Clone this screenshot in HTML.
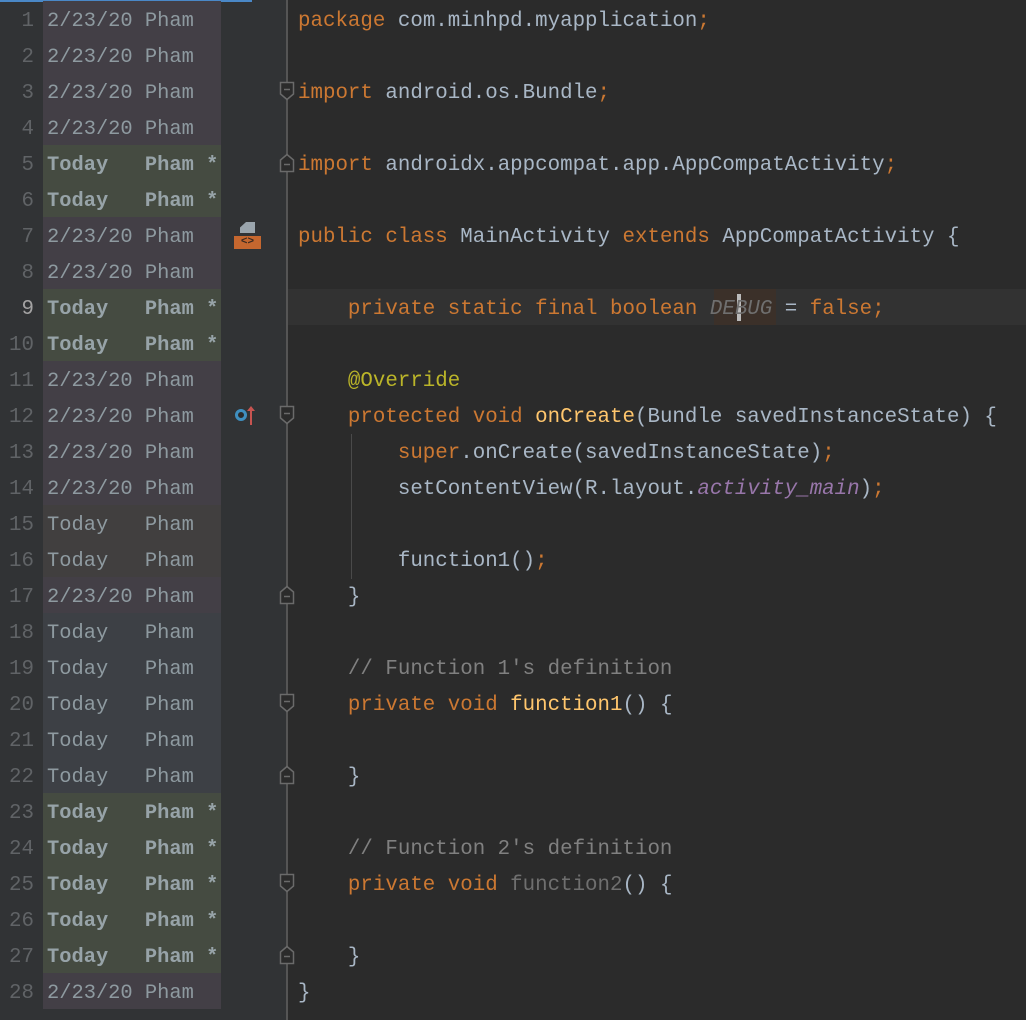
<!DOCTYPE html><html><head><style>
body{margin:0;width:1026px;height:1020px;background:#2b2b2b;overflow:hidden;position:relative;font-family:"Liberation Mono",monospace;font-size:20.8px}
.g{position:absolute;left:0;top:0;width:288px;height:1020px;background:#313335}
.r{position:absolute;height:36px;line-height:36px;white-space:pre}
.n{left:0;width:34px;text-align:right;color:#606366}
.a{left:43px;width:178px;padding-left:4px;box-sizing:border-box;color:#8e9aa0;font-size:20.4px}
.o{background:#433f46}.t{background:#454b41;font-weight:bold;color:#97a3a8}.u{background:#413f3f}.v{background:#3d4045}
.c{left:298px;color:#a9b7c6}
.k{color:#cc7832}.m{color:#ffc66d}.cm{color:#808080}.an{color:#bbb529}.f{color:#9876aa;font-style:italic}.x{color:#6f6f6f}
.fold{position:absolute;left:279px;width:16px;height:20px}
</style></head><body>
<div class="g"></div>
<div style="position:absolute;left:0;top:0;width:252px;height:2px;background:#4a88c7"></div>
<div style="position:absolute;left:286px;top:0;width:2px;height:1020px;background:#555"></div>
<div style="position:absolute;left:288px;top:289px;width:738px;height:36px;background:#323232"></div>
<div style="position:absolute;left:714px;top:289px;width:62px;height:36px;background:#3b3029"></div>
<div style="position:absolute;left:351px;top:434px;width:1px;height:145px;background:#4a4a4a"></div>
<div style="position:absolute;left:737px;top:294px;width:4px;height:27px;background:#bbb"></div>
<div style="position:absolute;left:240px;top:222px;width:15px;height:11px;background:#9aa5ad;clip-path:polygon(40% 0,100% 0,100% 100%,0 100%,0 50%)"></div>
<div style="position:absolute;left:234px;top:236px;width:27px;height:13px;background:#c5672f;color:#3a2a20;font-size:11px;line-height:13px;text-align:center;font-weight:bold">&lt;&gt;</div>
<div style="position:absolute;left:235px;top:409px;border:3px solid #3f8fbf;border-radius:50%;width:6px;height:6px;background:#2b2b2b"></div>
<div style="position:absolute;left:250px;top:408px;width:2px;height:17px;background:#c75450"></div>
<div style="position:absolute;left:247px;top:406px;width:0;height:0;border-left:4px solid transparent;border-right:4px solid transparent;border-bottom:5px solid #c75450"></div>
<div id="rows"></div>
<script>
const a=[
["o","2/23/20 Pham"],["o","2/23/20 Pham"],["o","2/23/20 Pham"],["o","2/23/20 Pham"],
["t","Today   Pham *"],["t","Today   Pham *"],["o","2/23/20 Pham"],["o","2/23/20 Pham"],
["t","Today   Pham *"],["t","Today   Pham *"],["o","2/23/20 Pham"],["o","2/23/20 Pham"],
["o","2/23/20 Pham"],["o","2/23/20 Pham"],["u","Today   Pham"],["u","Today   Pham"],
["o","2/23/20 Pham"],["v","Today   Pham"],["v","Today   Pham"],["v","Today   Pham"],["v","Today   Pham"],["v","Today   Pham"],
["t","Today   Pham *"],["t","Today   Pham *"],["t","Today   Pham *"],["t","Today   Pham *"],["t","Today   Pham *"],["o","2/23/20 Pham"]];
const c=[
'<span class=k>package</span> com.minhpd.myapplication<span class=k>;</span>','',
'<span class=k>import</span> android.os.Bundle<span class=k>;</span>','',
'<span class=k>import</span> androidx.appcompat.app.AppCompatActivity<span class=k>;</span>','',
'<span class=k>public class</span> MainActivity <span class=k>extends</span> AppCompatActivity {','',
'    <span class=k>private static final boolean</span> <span class=f style="color:#6f6f6f">DEBUG</span> = <span class=k>false;</span>','',
'    <span class=an>@Override</span>',
'    <span class=k>protected void</span> <span class=m>onCreate</span>(Bundle savedInstanceState) {',
'        <span class=k>super</span>.onCreate(savedInstanceState)<span class=k>;</span>',
'        setContentView(R.layout.<span class=f>activity_main</span>)<span class=k>;</span>','',
'        function1()<span class=k>;</span>','    }','',
'    <span class=cm>// Function 1\'s definition</span>',
'    <span class=k>private void</span> <span class=m>function1</span>() {','','    }','',
'    <span class=cm>// Function 2\'s definition</span>',
'    <span class=k>private void</span> <span class=x>function2</span>() {','','    }','}'];
let h='';
for(let i=0;i<28;i++){const y=1+i*36,ty=y+3;
h+=`<div class="r n" style="top:${ty}px;${i==8?'color:#a4a3a3':''}">${i+1}</div>`;
h+=`<div class="r a ${a[i][0]}" style="top:${y}px;line-height:42px">${a[i][1]}</div>`;
h+=`<div class="r c" style="top:${ty}px">${c[i]}</div>`;}
const dn='<svg width="16" height="20" viewBox="0 0 16 20"><path d="M1.5 1.5H14.5V13L8 18.5L1.5 13Z" fill="#2b2b2b" stroke="#6a6a6a" stroke-width="1.5"/><path d="M5 8.5H11" stroke="#6a6a6a" stroke-width="1.5"/></svg>';
const up='<svg width="16" height="20" viewBox="0 0 16 20"><path d="M1.5 18.5H14.5V7L8 1.5L1.5 7Z" fill="#2b2b2b" stroke="#6a6a6a" stroke-width="1.5"/><path d="M5 11.5H11" stroke="#6a6a6a" stroke-width="1.5"/></svg>';
[2,11,19,24].forEach(i=>{h+=`<div class="fold" style="top:${1+i*36+8}px">${dn}</div>`});
[4,16,21,26].forEach(i=>{h+=`<div class="fold" style="top:${1+i*36+8}px">${up}</div>`});
document.getElementById('rows').innerHTML=h;
</script>
</body></html>
